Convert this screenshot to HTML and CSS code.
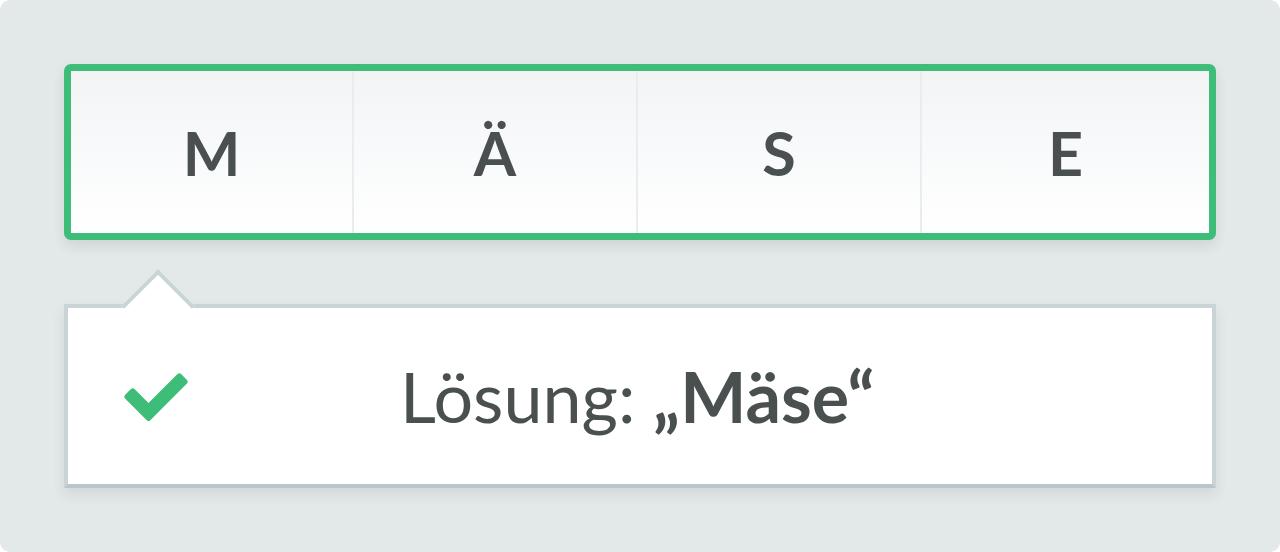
FILE: index.html
```html
<!DOCTYPE html>
<html lang="de">
<head>
<meta charset="utf-8">
<link rel="stylesheet" href="styles.css">
</head>
<body>
<div class="panel">
  <div class="word">
    <div class="cell">M</div>
    <div class="cell">Ä</div>
    <div class="cell">S</div>
    <div class="cell">E</div>
  </div>
  <div class="bubble">
    <svg class="check" width="72" height="60" viewBox="0 0 72 60" aria-hidden="true">
      <polygon points="6.8,28.7 12.7,22.8 28.5,38.6 59.3,7.8 65.2,13.7 28.5,50.4" fill="#3dbd78" stroke="#3dbd78" stroke-width="5" stroke-linejoin="round"/>
    </svg>
    <p class="answer">Lösung: <b>„Mäse“</b></p>
  </div>
</div>
</body>
</html>
```

FILE: styles.css
```css
* { box-sizing: border-box; }
html, body { margin: 0; background: #ffffff; }
body { font-family: Lato, "Noto Sans", sans-serif; }

.panel {
  width: 1280px;
  height: 552px;
  background: #e3e8e9;
  border-radius: 10px;
  padding: 64px;
  display: flex;
  flex-direction: column;
  gap: 64px;
}

.word {
  height: 176px;
  border: 7px solid #3dbd78;
  border-radius: 7px;
  background: linear-gradient(#f2f4f6, #ffffff);
  display: grid;
  grid-template-columns: 283px 284px 284px 1fr;
  box-shadow: 0 6px 12px rgba(60, 80, 85, 0.12);
}

.cell {
  display: flex;
  align-items: center;
  justify-content: center;
  font-weight: 700;
  font-size: 61px;
  color: #4a4f50;
  border-right: 2px solid #eaedee;
}
.cell:last-child { border-right: 0; }

.bubble {
  position: relative;
  height: 184px;
  background: #ffffff;
  border: 4px solid #c9d4d7;
  border-bottom-color: #b9c6ca;
  display: flex;
  align-items: center;
  padding-left: 52px;
  box-shadow: 0 6px 12px rgba(60, 80, 85, 0.10);
}
.bubble::before {
  content: "";
  position: absolute;
  left: 64px;
  top: -28px;
  width: 48px;
  height: 48px;
  background: #ffffff;
  border-top: 4px solid #c9d4d7;
  border-left: 4px solid #c9d4d7;
  transform: rotate(45deg);
}

.check { flex: none; margin-top: 4px; }

.answer {
  margin: 0 0 0 208px;
  font-size: 70px;
  font-weight: 400;
  color: #4a4f50;
  line-height: 1;
}
.answer b { font-weight: 700; }
```
